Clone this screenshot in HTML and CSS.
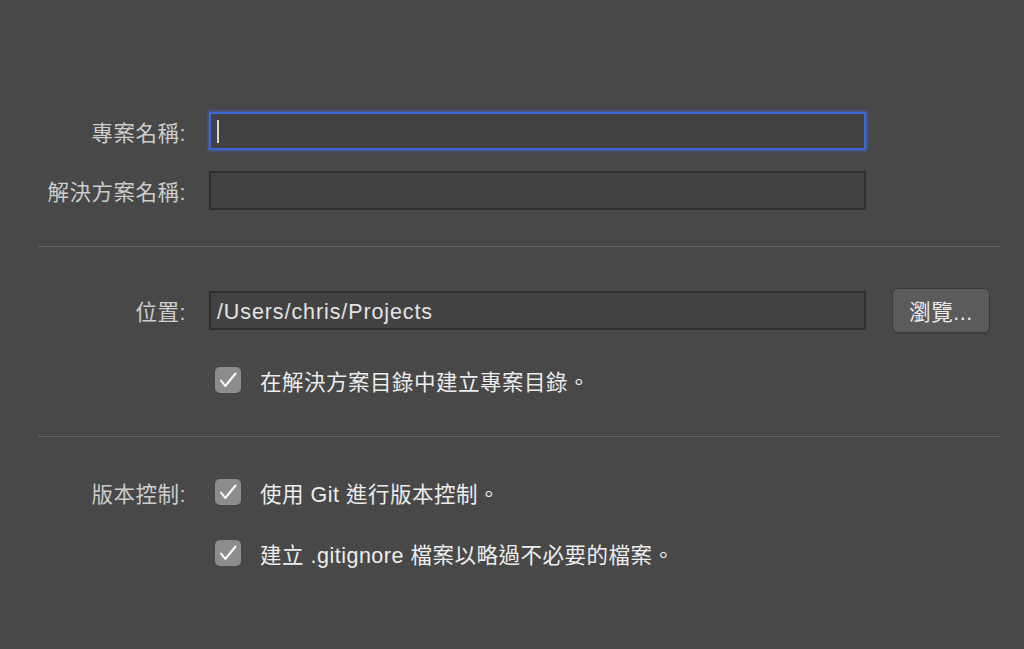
FILE: index.html
```html
<!DOCTYPE html>
<html lang="zh-Hant">
<head>
<meta charset="utf-8">
<title>新增專案</title>
<link rel="stylesheet" href="styles.css">
</head>
<body>
<div class="form">
  <div class="row row-name">
    <label class="label">專案名稱:</label>
    <div class="field focused"><span class="caret"></span></div>
  </div>
  <div class="row row-solution">
    <label class="label">解決方案名稱:</label>
    <div class="field"></div>
  </div>
  <hr class="sep sep-1">
  <div class="row row-location">
    <label class="label">位置:</label>
    <div class="field"><span class="value">/Users/chris/Projects</span></div>
    <button class="btn">瀏覽...</button>
  </div>
  <div class="row row-check1">
    <span class="label"></span>
    <span class="check"><svg viewBox="0 0 26 26" width="26" height="26"><path d="M6 13.5 L10.3 19 L20.5 6.5" fill="none" stroke="#ffffff" stroke-width="2" stroke-linecap="round" stroke-linejoin="round"/></svg></span>
    <span class="check-text">在解決方案目錄中建立專案目錄。</span>
  </div>
  <hr class="sep sep-2">
  <div class="row row-vc1">
    <span class="label">版本控制:</span>
    <span class="check"><svg viewBox="0 0 26 26" width="26" height="26"><path d="M6 13.5 L10.3 19 L20.5 6.5" fill="none" stroke="#ffffff" stroke-width="2" stroke-linecap="round" stroke-linejoin="round"/></svg></span>
    <span class="check-text">使用 Git 進行版本控制。</span>
  </div>
  <div class="row row-vc2">
    <span class="label"></span>
    <span class="check"><svg viewBox="0 0 26 26" width="26" height="26"><path d="M6 13.5 L10.3 19 L20.5 6.5" fill="none" stroke="#ffffff" stroke-width="2" stroke-linecap="round" stroke-linejoin="round"/></svg></span>
    <span class="check-text">建立 .gitignore 檔案以略過不必要的檔案。</span>
  </div>
</div>
</body>
</html>
```

FILE: styles.css
```css
html, body {
  margin: 0;
  padding: 0;
  background: #484848;
  height: 100%;
}
body {
  font-family: "Liberation Sans", "Noto Sans CJK TC", sans-serif;
  font-size: 21.5px;
  letter-spacing: 0.5px;
  color: #d0d0d0;
  overflow: hidden;
}
.form {
  display: flex;
  flex-direction: column;
  padding-top: 112px;
}
.row {
  display: flex;
  align-items: center;
}
.label {
  width: 186px;
  flex: none;
  text-align: right;
  color: #cdcdcd;
  white-space: nowrap;
}
.field {
  margin-left: 23px;
  width: 653px;
  height: 35px;
  flex: none;
  background: #424242;
  border: 2px solid #2f2f2f;
  display: flex;
  align-items: center;
  box-sizing: content-box;
}
.field.focused {
  border-color: #3a66d8;
  box-shadow: 0 0 3px 1px rgba(70, 110, 230, 0.6);
  height: 34px;
}
.caret {
  display: block;
  width: 2px;
  height: 23px;
  margin-left: 6px;
  background: #d8d8d8;
}
.value {
  margin-left: 6px;
  padding-top: 3px;
  color: #e2e2e2;
  letter-spacing: 0.9px;
  white-space: nowrap;
}
.row-solution {
  margin-top: 21px;
}
.sep {
  margin: 0 23px 0 38px;
  border: 0;
  height: 1px;
  background: #646464;
}
.sep-1 {
  margin-top: 36px;
}
.row-location {
  margin-top: 41px;
  height: 45px;
}
.btn {
  margin-left: 26px;
  width: 98px;
  height: 45px;
  border: 1px solid #3b3b3b;
  border-radius: 6px;
  background: #5b5b5b;
  color: #ececec;
  font: inherit;
  letter-spacing: 0.5px;
  padding: 0;
  box-shadow: 0 1px 0 rgba(0,0,0,0.15);
}
.row-check1 {
  margin-top: 34px;
  height: 26px;
}
.check {
  margin-left: 29px;
  width: 26px;
  height: 26px;
  flex: none;
  border-radius: 5px;
  background: #8c8c8c;
  display: block;
}
.check svg {
  display: block;
}
.check-text {
  margin-left: 19px;
  color: #ededed;
  white-space: nowrap;
}
.sep-2 {
  margin-top: 43px;
}
.row-vc1 {
  margin-top: 42px;
  height: 26px;
}
.row-vc2 {
  margin-top: 35px;
  height: 26px;
}
```
